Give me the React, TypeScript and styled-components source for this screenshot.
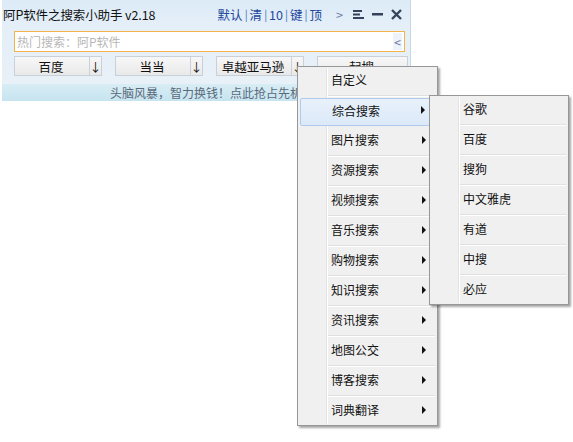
import * as React from "react";
import styled, { createGlobalStyle, css } from "styled-components";

const GlobalStyle = createGlobalStyle`
  html, body {
    margin: 0;
    padding: 0;
    background: #ffffff;
  }
  body {
    font-family: "Noto Sans CJK SC", "Liberation Sans", sans-serif;
    font-size: 12px;
    color: #000;
  }
`;

const Page = styled.div`
  position: relative;
  width: 573px;
  height: 442px;
  overflow: hidden;
  padding-left: 2px;
  box-sizing: border-box;
`;

const Window = styled.div`
  width: 408px;
  height: 101px;
  display: flex;
  flex-direction: column;
  background: linear-gradient(#e3eef7, #e9f1f8);
  border-right: 1px solid #c4d8e6;
`;

const TitleBar = styled.div`
  height: 28px;
  display: flex;
  align-items: center;
  justify-content: space-between;
  padding: 0 4px 0 1px;
  background: linear-gradient(#dcebf7, #e5eff8);
`;

const Title = styled.div`
  font-size: 12.5px;
  letter-spacing: -0.1px;
  color: #111;
`;

const Links = styled.div`
  display: flex;
  align-items: center;
  color: #2a4fa6;
  font-size: 12.5px;
`;

const Link = styled.span`
  color: #24479c;
`;

const Bar = styled.span`
  color: #3f6fc0;
  margin: 0 2px;
  font-size: 11px;
`;

const ToolIcon = styled.span<{ $muted?: boolean }>`
  display: flex;
  align-items: center;
  justify-content: center;
  width: 19px;
  height: 16px;
  color: ${(p) => (p.$muted ? "#6a7fae" : "#2f3d52")};
  margin-left: ${(p) => (p.$muted ? "8px" : "0")};
`;

const SearchBox = styled.div`
  margin: 3px 5px 0 12px;
  height: 19px;
  border: 1px solid #f2b348;
  background: #fff;
  display: flex;
  align-items: center;
  justify-content: space-between;
  padding: 0 2px;
  color: #b7b7b7;
  font-size: 12px;
`;

const Chevron = styled.span`
  color: #6878a8;
  font-size: 12px;
  background: #eef2fa;
  padding: 0 1px;
`;

const ButtonRow = styled.div`
  margin: 4px 5px 0 12px;
  display: grid;
  grid-template-columns: 88px 88px 88px 91px;
  column-gap: 13px;
`;

const SplitButton = styled.div<{ $plain?: boolean }>`
  height: 20px;
  display: grid;
  grid-template-columns: ${(p) => (p.$plain ? "1fr" : "1fr 12px")};
  border: 1px solid #c9d0d7;
  background: linear-gradient(#f7f7f7, #e9e9e9);
  box-sizing: border-box;
  font-size: 12.5px;
`;

const ButtonLabel = styled.span`
  display: flex;
  align-items: center;
  justify-content: center;
  padding-right: 2px;
  color: #111;
`;

const ButtonArrow = styled.span`
  display: flex;
  align-items: center;
  justify-content: center;
  border-left: 1px solid #c9d0d7;
  font-size: 12px;
  color: #111;
`;

const Footer = styled.div`
  margin-top: auto;
  height: 17px;
  background: linear-gradient(#d8edf5, #c6e4f0);
  display: flex;
  align-items: center;
  padding-left: 108px;
  color: #5a6a7a;
  font-size: 12px;
  white-space: nowrap;
  overflow: hidden;
`;

const Menu = styled.div<{ $left: number; $top: number; $width: number }>`
  position: absolute;
  left: ${(p) => p.$left}px;
  top: ${(p) => p.$top}px;
  width: ${(p) => p.$width}px;
  background: #f0f0f0;
  border: 1px solid #979797;
  box-shadow: 2px 2px 2px rgba(0, 0, 0, 0.35);
  padding: 0 2px;
  box-sizing: border-box;
  &::before {
    content: "";
    position: absolute;
    top: 1px;
    bottom: 1px;
    left: 28px;
    width: 1px;
    background: #e2e3e3;
    border-right: 1px solid #ffffff;
  }
`;

const Item = styled.div<{ $active?: boolean; $last?: boolean }>`
  position: relative;
  height: 30px;
  display: grid;
  grid-template-columns: 31px 1fr 13px;
  align-items: center;
  padding-bottom: 5px;
  box-sizing: border-box;
  font-size: 12px;
  color: #111;
  ${(p) =>
    p.$last
      ? css`
          height: 28px;
          padding-bottom: 3px;
        `
      : css`
          &::after {
            content: "";
            position: absolute;
            left: 28px;
            right: 0;
            bottom: 0;
            height: 1px;
            background: #e0e0e0;
            border-bottom: 1px solid #ffffff;
          }
        `}
  ${(p) =>
    p.$active &&
    css`
      background: linear-gradient(#e8f1fb, #dbe9f8);
      border: 1px solid #aecbee;
      border-radius: 2px;
      margin-top: 1px;
      height: 28px;
      padding-bottom: 4px;
      margin-bottom: 1px;
      &::after {
        display: none;
      }
    `}
`;

const ItemText = styled.span`
  grid-column: 2;
`;

const SubArrow = styled.span`
  grid-column: 3;
  width: 0;
  height: 0;
  border-top: 4px solid transparent;
  border-bottom: 4px solid transparent;
  border-left: 4px solid #111;
`;

const mainItems = [
  "自定义",
  "综合搜索",
  "图片搜索",
  "资源搜索",
  "视频搜索",
  "音乐搜索",
  "购物搜索",
  "知识搜索",
  "资讯搜索",
  "地图公交",
  "博客搜索",
  "词典翻译",
];

const subItems = ["谷歌", "百度", "搜狗", "中文雅虎", "有道", "中搜", "必应"];

const engines = ["百度", "当当", "卓越亚马逊"];

const MenuIcon = () => (
  <svg width="11" height="9" viewBox="0 0 11 9">
    <rect x="0" y="0" width="9" height="2" fill="#34425a" />
    <rect x="0" y="3.5" width="7" height="2" fill="#34425a" />
    <rect x="0" y="7" width="11" height="2" fill="#34425a" />
  </svg>
);

const MinIcon = () => (
  <svg width="11" height="3" viewBox="0 0 11 3">
    <rect x="0" y="0" width="11" height="2.5" fill="#34425a" />
  </svg>
);

const CloseIcon = () => (
  <svg width="11" height="11" viewBox="0 0 11 11">
    <path d="M1 1 L10 10 M10 1 L1 10" stroke="#34425a" strokeWidth="2.4" />
  </svg>
);

const App: React.FC = () => {
  return (
    <Page>
      <GlobalStyle />
      <Window>
        <TitleBar>
          <Title>阿P软件之搜索小助手 v2.18</Title>
          <Links>
            <Link>默认</Link>
            <Bar>|</Bar>
            <Link>清</Link>
            <Bar>|</Bar>
            <Link>10</Link>
            <Bar>|</Bar>
            <Link>键</Link>
            <Bar>|</Bar>
            <Link>顶</Link>
            <ToolIcon $muted>&gt;</ToolIcon>
            <ToolIcon>
              <MenuIcon />
            </ToolIcon>
            <ToolIcon>
              <MinIcon />
            </ToolIcon>
            <ToolIcon>
              <CloseIcon />
            </ToolIcon>
          </Links>
        </TitleBar>
        <SearchBox>
          <span>热门搜索：阿P软件</span>
          <Chevron>&lt;</Chevron>
        </SearchBox>
        <ButtonRow>
          {engines.map((e) => (
            <SplitButton key={e}>
              <ButtonLabel>{e}</ButtonLabel>
              <ButtonArrow>↓</ButtonArrow>
            </SplitButton>
          ))}
          <SplitButton $plain>
            <ButtonLabel>起搜</ButtonLabel>
          </SplitButton>
        </ButtonRow>
        <Footer>头脑风暴，智力换钱！点此抢占先机！</Footer>
      </Window>

      <Menu $left={297} $top={66} $width={141}>
        {mainItems.map((t, i) => (
          <Item key={t} $active={i === 1} $last={i === mainItems.length - 1}>
            <ItemText>{t}</ItemText>
            {i > 0 && <SubArrow />}
          </Item>
        ))}
      </Menu>

      <Menu $left={429} $top={95} $width={140}>
        {subItems.map((t, i) => (
          <Item key={t} $last={i === subItems.length - 1}>
            <ItemText>{t}</ItemText>
          </Item>
        ))}
      </Menu>
    </Page>
  );
};

export default App;
